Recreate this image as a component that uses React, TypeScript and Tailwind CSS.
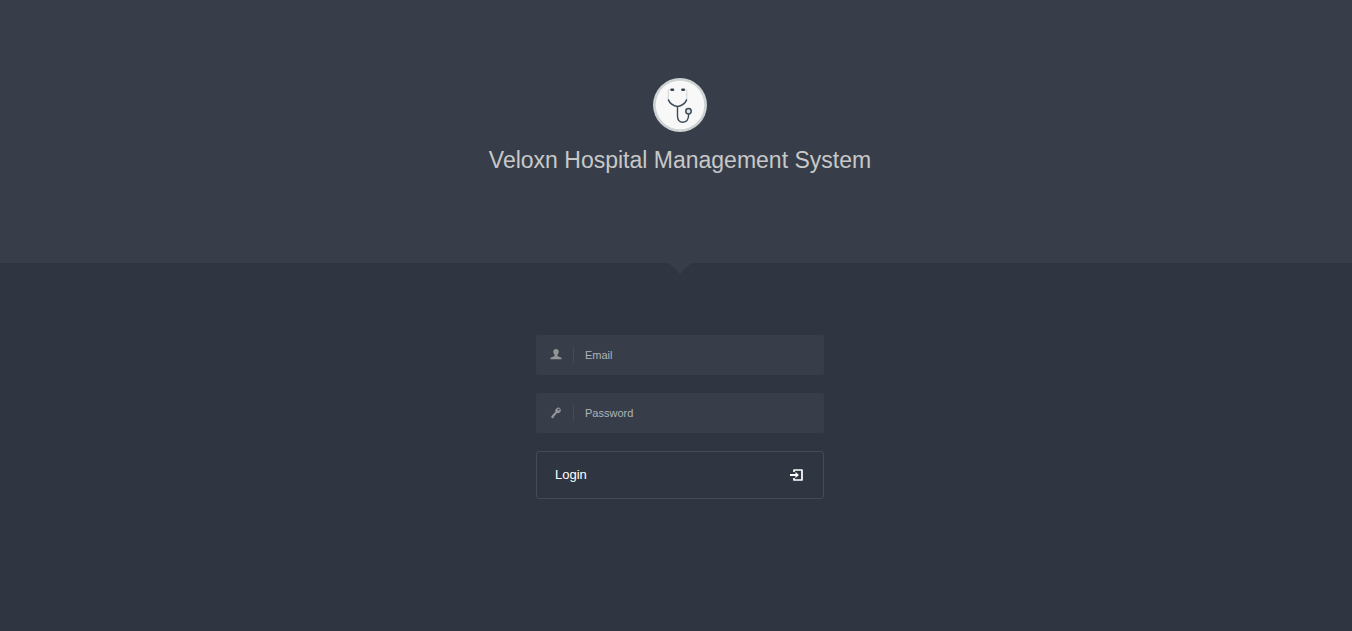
import type { ReactNode } from "react";

function Logo() {
  return (
    <svg viewBox="0 0 54 54" className="size-[54px]" role="img" aria-label="Veloxn">
      <circle cx="27" cy="27" r="27" fill="#cdd2d3" />
      <circle cx="27" cy="27" r="24.3" fill="#f8f8f8" />
      <g fill="none" strokeLinecap="round">
        <path
          d="M18 11.500h-1.200c-1 0-1.500.6-1.500 1.600V22M31.500 11.500h.7c1 0 1.500.6 1.500 1.600V22"
          stroke="#d6dadb"
          strokeWidth="1.200"
        />
        <path
          d="M15.500 22c1 2.600 4.500 6.500 9 6.500s8-3.900 9-6.500"
          stroke="#3c4b59"
          strokeWidth="1.600"
        />
        <path
          d="M24.500 28.500V38c0 4 2 6.200 5.500 6.200s5.500-3 5.700-7.700"
          stroke="#3c4b59"
          strokeWidth="1.400"
        />
        <circle cx="35.500" cy="33.200" r="2.700" fill="#dfe3e4" stroke="#3c4b59" strokeWidth="1.500" />
      </g>
      <rect x="17.500" y="10.500" width="3.600" height="2.500" rx=".8" fill="#34404d" />
      <rect x="28.300" y="10.500" width="3.600" height="2.500" rx=".8" fill="#34404d" />
    </svg>
  );
}

function UserIcon() {
  return (
    <svg viewBox="0 0 12 12" className="size-3" fill="currentColor" aria-hidden="true">
      <path d="M6 0c1.800 0 2.700 1 2.700 2.600 0 1.200-.4 2.300-1.200 3v1.100c0 .5.300.7.800.9l2.100.7c.8.300 1.200.8 1.300 1.900H.3c.1-1.100.5-1.600 1.300-1.900l2.100-.7c.5-.2.800-.4.800-.9V5.600c-.8-.7-1.200-1.800-1.200-3C3.300 1 4.200 0 6 0z" />
    </svg>
  );
}

function KeyIcon() {
  return (
    <svg viewBox="0 0 12 12" className="size-3" aria-hidden="true">
      <path
        fill="currentColor"
        fillRule="evenodd"
        d="M9.700 1c1.400 1.200 1.500 3 .3 4.200-.8.900-2 1.200-3 .9L3.900 9.800l-.3 1.100-1.400.4-1-.9.300-1.400L5.300 4.900c-.3-1.100 0-2.300.8-3.100C7.200.6 8.600.2 9.700 1zM9.300 1.900c-.5-.4-1.200-.2-1.500.2s-.2.900.2 1.200c.4.400 1 .4 1.300 0s.4-1 0-1.400z"
      />
    </svg>
  );
}

function LoginIcon() {
  return (
    <svg viewBox="0 0 14 14" className="size-3.5" aria-hidden="true">
      <path
        d="M4 4V2h8v10H4v-2"
        fill="none"
        stroke="currentColor"
        strokeWidth="1.700"
        strokeLinejoin="round"
      />
      <path d="M0 6h5.500V4L9 7l-3.500 3V8H0z" fill="currentColor" />
    </svg>
  );
}

function Field({
  id,
  type,
  label,
  icon,
}: {
  id: string;
  type: string;
  label: string;
  icon: ReactNode;
}) {
  return (
    <div className="flex h-10 items-center rounded-[3px] bg-[#373e4a]">
      <label
        htmlFor={id}
        aria-label={label}
        className="flex h-4 w-[38px] shrink-0 items-center border-r border-[#454a54] pl-3.5 text-[#949494]"
      >
        {icon}
      </label>
      <input
        id={id}
        name={id}
        type={type}
        placeholder={label}
        aria-label={label}
        autoComplete="off"
        className="h-full min-w-0 flex-1 bg-transparent px-[11px] pb-px text-[11px] text-white outline-none placeholder:text-[#b2b3b6]"
      />
    </div>
  );
}

export default function App() {
  return (
    <div className="min-h-screen bg-[#303641] font-['Liberation_Sans',Arial,sans-serif]">
      <header className="relative flex flex-col items-center bg-[#373e4a] pt-[78px] pb-[86px] pl-2">
        <Logo />
        <h1 className="mt-3 text-[23px] leading-[33px] text-[#c8c8c8]">
          Veloxn Hospital Management System
        </h1>
        <svg
          viewBox="0 0 22 11"
          className="absolute top-full left-1/2 -ml-[7px] h-[11px] w-[22px]"
          aria-hidden="true"
        >
          <path d="M0 0h22L11 11z" fill="#373e4a" />
        </svg>
      </header>

      <main className="flex justify-center pt-[72px] pb-20 pl-2">
        <form
          className="flex w-72 flex-col gap-[18px]"
          onSubmit={(e) => e.preventDefault()}
        >
          <Field id="email" type="email" label="Email" icon={<UserIcon />} />
          <Field id="password" type="password" label="Password" icon={<KeyIcon />} />
          <button
            type="submit"
            className="flex h-12 cursor-pointer items-center justify-between rounded-[3px] border border-[#454a54] pr-[19px] pl-[18px] text-[13px] text-white"
          >
            Login
            <LoginIcon />
          </button>
        </form>
      </main>
    </div>
  );
}
